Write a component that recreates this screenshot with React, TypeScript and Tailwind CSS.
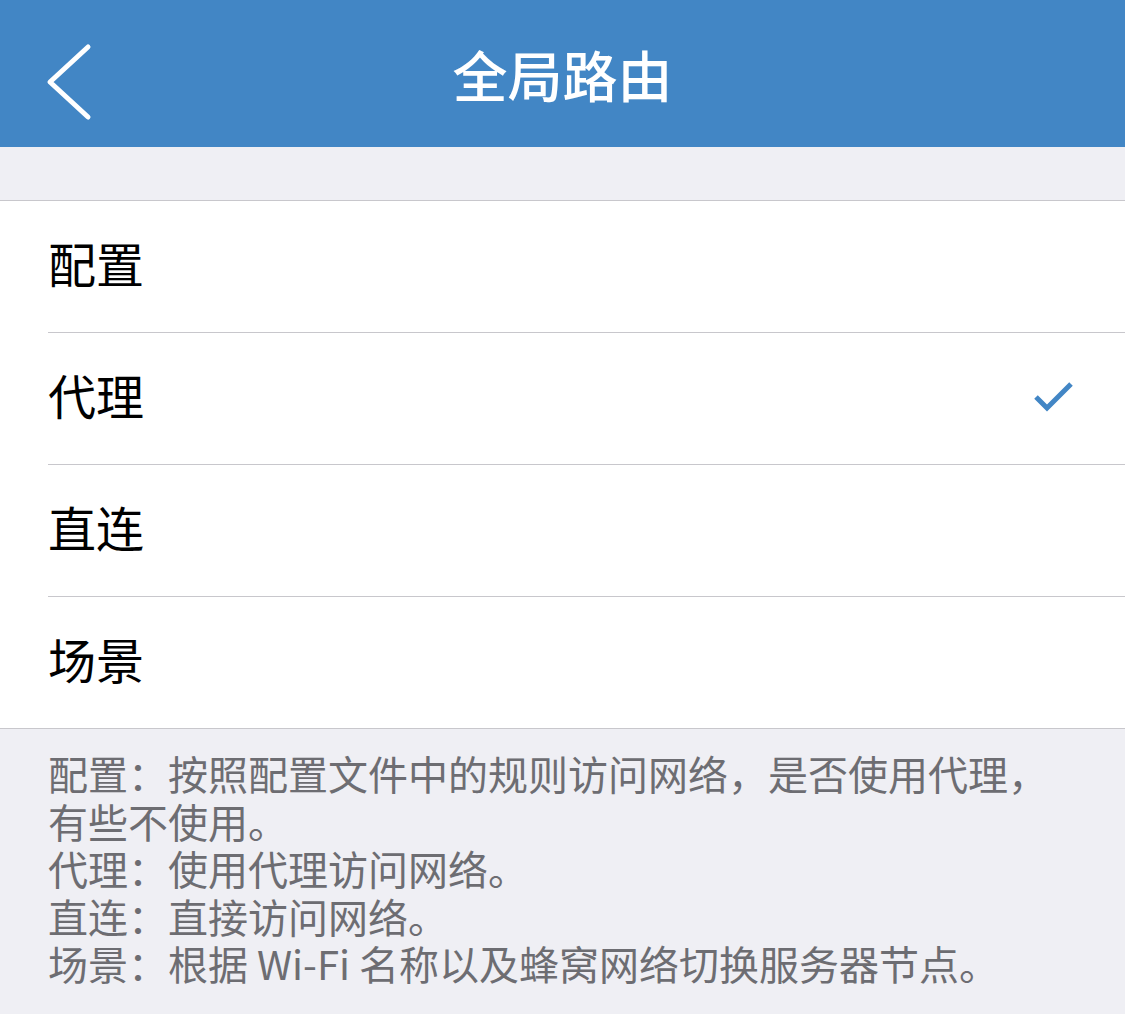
export default function App() {
  const items = ["配置", "代理", "直连", "场景"];
  const selected = "代理";

  return (
    <div
      className="w-[1125px] h-[1014px] bg-[#efeff4] overflow-hidden"
      style={{ fontFamily: '"Noto Sans CJK SC", "Noto Sans", sans-serif' }}
    >
      {/* Nav bar */}
      <div className="relative h-[147px] bg-[#4286c5] flex items-center justify-center">
        <button className="absolute left-[40px] top-[40px]">
          <svg width="56" height="86" viewBox="0 0 56 86" fill="none">
            <path
              d="M48 7 L10 42 L48 77"
              stroke="white"
              strokeWidth="5"
              strokeLinecap="round"
              strokeLinejoin="round"
            />
          </svg>
        </button>
        <h1 className="text-white text-[55px] font-medium leading-none">全局路由</h1>
      </div>

      <div className="h-[53px]" />

      {/* Options */}
      <div className="bg-white border-t border-b border-[#c8c7cc]">
        {items.map((item, i) => (
          <div key={item} className="pl-[48px]">
            <div
              className={
                "flex items-center justify-between pr-[50px] " +
                (i < items.length - 1 ? "h-[132px] border-b border-[#c8c7cc]" : "h-[131px]")
              }
            >
              <span className="text-[48px] text-black leading-none pb-[9px]">{item}</span>
              {item === selected && (
                <svg width="42" height="32" viewBox="0 0 42 32" fill="none" className="mb-[6px]">
                  <path d="M3 17 L14 28 L38 4" stroke="#4286c5" strokeWidth="5" />
                </svg>
              )}
            </div>
          </div>
        ))}
      </div>

      {/* Footer description */}
      <div className="px-[48px] pt-[21px] text-[40px] leading-[47.5px] text-[#6d6d72]">
        <p>配置：按照配置文件中的规则访问网络，是否使用代理，</p>
        <p>有些不使用。</p>
        <p>代理：使用代理访问网络。</p>
        <p>直连：直接访问网络。</p>
        <p>场景：根据 Wi-Fi 名称以及蜂窝网络切换服务器节点。</p>
      </div>
    </div>
  );
}
